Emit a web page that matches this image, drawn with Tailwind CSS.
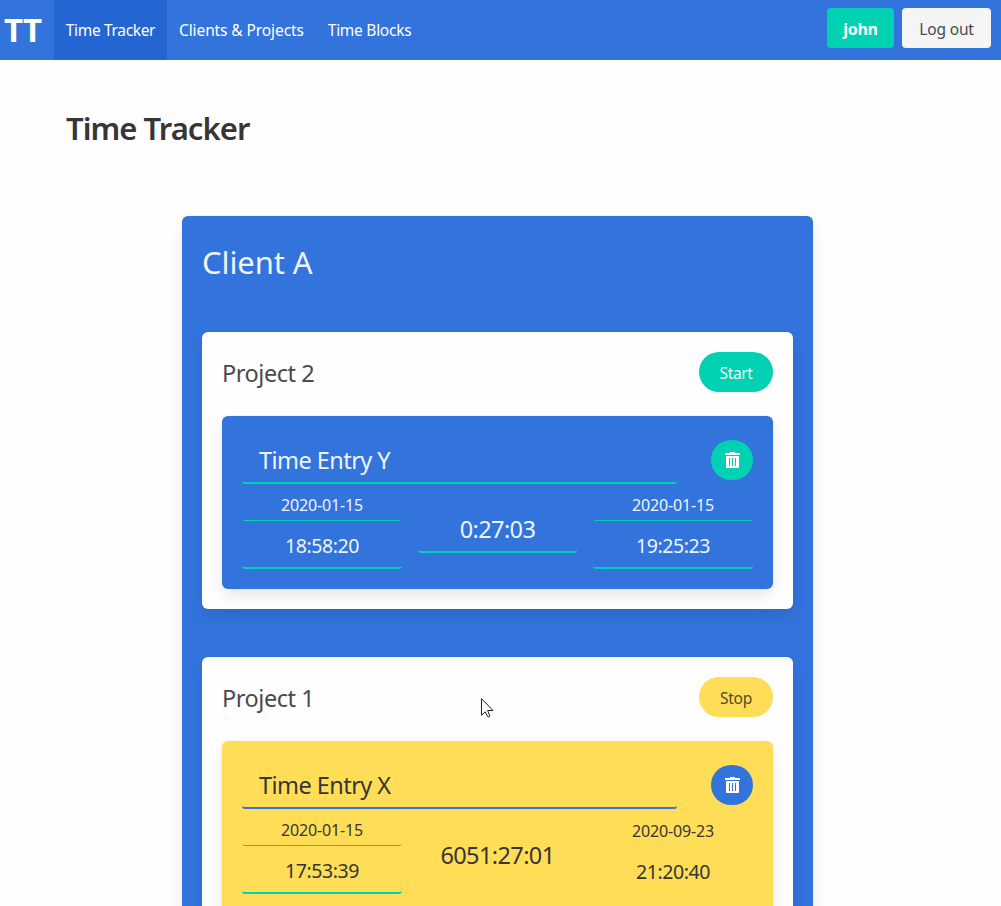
<!DOCTYPE html>
<html lang="en">
<head>
<meta charset="utf-8">
<title>Time Tracker</title>
<script src="https://cdn.jsdelivr.net/npm/@tailwindcss/browser@4"></script>
</head>
<body class="bg-[#fefefe] font-['Noto_Sans','Open_Sans',sans-serif] text-[15.5px] text-[#363636]">
<div class="h-screen overflow-hidden">
<nav class="flex h-[60px] items-stretch bg-[#3273dc] pr-[10px] text-white">
  <a class="flex w-[54px] items-center pl-1 font-['Open_Sans'] text-[33px] font-bold"><span>TT</span></a>
  <a class="flex w-[113px] items-center justify-center bg-[#2366d1] pt-px tracking-[-0.33px]">Time Tracker</a>
  <a class="flex items-center pt-px pl-3 tracking-[-0.1px]">Clients &amp; Projects</a>
  <a class="flex items-center pt-px pl-6 tracking-[-0.27px]">Time Blocks</a>
  <div class="ml-auto flex items-center gap-2 pb-1">
    <button class="h-10 w-[67px] rounded bg-[#00d1b2] pt-[2px] text-base font-bold tracking-[-0.3px]">john</button>
    <button class="h-10 w-[89px] rounded bg-[#f5f5f5] pt-[4px] tracking-[-0.15px] text-[#4a4a4a]">Log out</button>
  </div>
</nav>
<main>
  <h1 class="mt-[46px] ml-[66px] h-[45px] text-[31px] leading-[44px] font-semibold tracking-[-0.95px]">Time Tracker</h1>
  <section class="mt-[65px] ml-[182px] w-[631px] rounded-md bg-[#3273dc] p-5 pb-12 shadow-[0_8px_16px_-2px_rgba(10,10,10,0.1),0_0_0_1px_rgba(10,10,10,0.02)]">
    <h2 class="h-24 pt-1 text-[31px] leading-[44px] tracking-[-0.1px] text-[#f0f4fc]">Client A</h2>

    <article class="h-[277px] rounded-md bg-[#fefefe] p-5 shadow-[0_8px_16px_-2px_rgba(10,10,10,0.1),0_0_0_1px_rgba(10,10,10,0.02)]">
      <header class="flex h-16 items-start justify-between">
        <h3 class="text-[23.5px] leading-[43px] tracking-[-0.45px] text-[#4a4a4a]">Project 2</h3>
        <button class="h-10 w-[74px] rounded-full bg-[#00d1b2] pt-[4px] tracking-[-0.4px] text-[#f0faf8]">Start</button>
      </header>
      <div class="h-[173px] rounded-md bg-[#3273dc] px-5 pt-6 text-[#f0f4fc] shadow-[0_8px_16px_-2px_rgba(10,10,10,0.1),0_0_0_1px_rgba(10,10,10,0.02)]">
        <div class="flex h-11 items-start justify-between">
          <div class="h-11 w-[435px] rounded-[3px] border-y-2 border-transparent border-b-[#00d1b2] pl-[17px] text-[23.5px] leading-[36px] tracking-[-0.55px]">Time Entry Y</div>
          <button class="flex h-10 w-[42px] items-center justify-center rounded-[20px] bg-[#00d1b2] text-white">
            <svg class="h-4 w-[15px]" viewBox="0 0 15 16" fill="currentColor"><path d="M5 0h5v1H15v2H0V1h5z"/><path fill-rule="evenodd" d="M1 4h13v11q0 1-1 1H2q-1 0-1-1zM4 6v8h1V6zm3 0v8h1V6zm3 0v8h1V6z"/></svg>
          </button>
        </div>
        <div class="flex gap-4 text-center">
          <div class="w-40">
            <div class="mt-2 h-[29px] rounded-[3px] border-y border-transparent border-b-[#00d1b2] text-base leading-[24px] tracking-[-0.15px]">2020-01-15</div>
            <div class="h-12 rounded-[3px] border-y-2 border-transparent border-b-[#00d1b2] text-[19.5px] leading-[45px] tracking-[-0.45px]">18:58:20</div>
          </div>
          <div class="mt-[25px] h-11 w-[159px] rounded-[3px] border-y-2 border-transparent border-b-[#00d1b2] text-[23.5px] leading-[36px] tracking-[-0.6px]">0:27:03</div>
          <div class="w-40">
            <div class="mt-2 h-[29px] rounded-[3px] border-y border-transparent border-b-[#00d1b2] text-base leading-[24px] tracking-[-0.15px]">2020-01-15</div>
            <div class="h-12 rounded-[3px] border-y-2 border-transparent border-b-[#00d1b2] text-[19.5px] leading-[45px] tracking-[-0.45px]">19:25:23</div>
          </div>
        </div>
      </div>
    </article>

    <article class="relative mt-12 h-[277px] rounded-md bg-[#fefefe] p-5 shadow-[0_8px_16px_-2px_rgba(10,10,10,0.1),0_0_0_1px_rgba(10,10,10,0.02)]">
      <svg class="absolute top-[41px] left-[279px] h-5 w-[13px]" viewBox="0 0 13 20"><path d="M.5.7v16.6l3.7-3.5 2.7 5.1q1.6.3 2-1L6.600 12.500H12z" fill="#fff" stroke="#222" stroke-width="1"/></svg>
      <header class="flex h-16 items-start justify-between">
        <h3 class="text-[23.5px] leading-[43px] tracking-[-0.45px] text-[#4a4a4a]">Project 1</h3>
        <button class="h-10 w-[74px] rounded-full bg-[#ffdd57] pt-[4px] tracking-[-0.3px] text-[#54492a]">Stop</button>
      </header>
      <div class="h-[173px] rounded-md bg-[#ffdd57] px-5 pt-6 text-[#363636] shadow-[0_8px_16px_-2px_rgba(10,10,10,0.1),0_0_0_1px_rgba(10,10,10,0.02)]">
        <div class="flex h-11 items-start justify-between">
          <div class="h-11 w-[435px] rounded-[3px] border-y-2 border-transparent border-b-[#3273dc] pl-[17px] text-[23.5px] leading-[36px] tracking-[-0.55px]">Time Entry X</div>
          <button class="flex h-10 w-[42px] items-center justify-center rounded-[20px] bg-[#3273dc] text-white">
            <svg class="h-4 w-[15px]" viewBox="0 0 15 16" fill="currentColor"><path d="M5 0h5v1H15v2H0V1h5z"/><path fill-rule="evenodd" d="M1 4h13v11q0 1-1 1H2q-1 0-1-1zM4 6v8h1V6zm3 0v8h1V6zm3 0v8h1V6z"/></svg>
          </button>
        </div>
        <div class="flex gap-4 text-center">
          <div class="w-40">
            <div class="mt-2 h-[29px] rounded-[3px] border-y border-transparent border-b-[#00d1b2] text-base leading-[24px] tracking-[-0.15px]">2020-01-15</div>
            <div class="h-12 rounded-[3px] border-y-2 border-transparent border-b-[#00d1b2] text-[19.5px] leading-[45px] tracking-[-0.45px]">17:53:39</div>
          </div>
          <div class="mt-[25px] h-11 w-[159px] border-2 border-transparent text-[23.5px] leading-[38px] tracking-[-0.6px]">6051:27:01</div>
          <div class="w-40">
            <div class="mt-2 h-[29px] border border-transparent text-base leading-[26px] tracking-[-0.15px]">2020-09-23</div>
            <div class="h-12 border-2 border-transparent text-[19.5px] leading-[47px] tracking-[-0.45px]">21:20:40</div>
          </div>
        </div>
      </div>
    </article>
  </section>
</main>
</div>
</body>
</html>
